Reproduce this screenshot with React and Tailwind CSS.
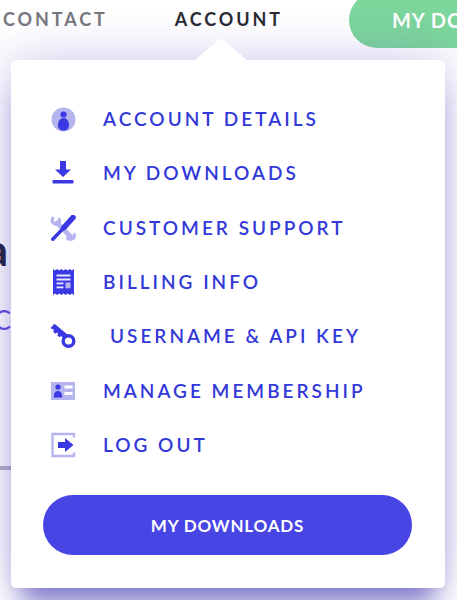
const blue = "#3a38e2";
const pale = "#b6b4ee";

const IconAccount = () => (
  <svg width="25" height="25" viewBox="0 0 25 25">
    <circle cx="12.500" cy="12.500" r="12" fill={pale} />
    <circle cx="12.500" cy="7.500" r="3.100" fill={blue} />
    <path d="M7 18.500c0-4.500 2.200-7.500 5.500-7.500s5.500 3 5.500 7.500c0 3-2.400 5-5.500 5s-5.500-2-5.500-5z" fill={blue} />
  </svg>
);
const IconDownload = () => (
  <svg width="24" height="26" viewBox="0 0 24 26">
    <path d="M9 1h6v8.500h5l-8 7.500-8-7.500h5z" fill={blue} />
    <rect x="1.500" y="20" width="21" height="3.500" rx="0.800" fill={blue} />
  </svg>
);
const IconTools = () => (
  <svg width="26" height="26" viewBox="0 0 26 26">
    <g fill="none" stroke={pale} strokeLinecap="round">
      <path d="M7 8l14 14" strokeWidth="4.600" />
      <path d="M2.800 3.200c-1.600 3.200 .6 6.600 4.700 6 1.600-.5 2.400-2.200 1.800-4.700" strokeWidth="3.200" />
      <path d="M17.500 23.300c3 2.200 7.500 .6 7-3.800" strokeWidth="3.200" />
    </g>
    <path d="M2.800 24.200l11.500-12" stroke={blue} strokeWidth="3.400" strokeLinecap="round" />
    <path d="M14 12.500l9-10" stroke={blue} strokeWidth="5.600" strokeLinecap="round" />
  </svg>
);
const IconBilling = () => (
  <svg width="23" height="28" viewBox="0 0 23 28">
    <path d="M1 1l2.100 1.500L5.200 1l2.100 1.500L9.400 1l2.100 1.500L13.600 1l2.100 1.500L17.800 1l2.100 1.500L22 1v26l-2.100-1.500L17.800 27l-2.100-1.500L13.600 27l-2.100-1.500L9.400 27l-2.100-1.500L5.200 27l-2.100-1.500L1 27z" fill={blue} />
    <rect x="4.500" y="6.500" width="14" height="2" fill="#e8e8ff" />
    <rect x="4.500" y="10.500" width="14" height="2" fill="#e8e8ff" />
    <rect x="4.500" y="14.500" width="7" height="1.800" fill="#e8e8ff" />
    <rect x="4.500" y="18.500" width="7" height="1.800" fill="#e8e8ff" />
    <rect x="13.500" y="14.500" width="5" height="5.800" fill={pale} />
  </svg>
);
const IconKey = () => (
  <svg width="28" height="26" viewBox="0 0 28 26">
    <path d="M1.500 5l4-4.200L19 12l-3.500 4-3.500-3-1.500 1.200-2.200-2 1-1.500-1.400-1.200-1.600 1.200-2.100-2 .9-1.700z" fill={blue} />
    <circle cx="19.500" cy="18" r="5.300" fill="#fff" stroke={blue} strokeWidth="3.400" />
  </svg>
);
const IconCard = () => (
  <svg width="26" height="20" viewBox="0 0 26 20">
    <rect x="1" y="1" width="24" height="18" fill={pale} />
    <circle cx="8" cy="6" r="2.600" fill={blue} />
    <path d="M3.800 16.500c0-4.500 1.700-6.500 4.200-6.500s4.200 2 4.200 6.500z" fill={blue} />
    <rect x="14.500" y="4.500" width="8" height="3" fill="#fff" />
    <rect x="14.500" y="11" width="8" height="3" fill="#fff" />
  </svg>
);
const IconLogout = () => (
  <svg width="26" height="26" viewBox="0 0 26 26">
    <path d="M24 5.500V2H2.500v22H24v-3.500" fill="none" stroke={pale} strokeWidth="2.400" />
    <path d="M8 10h7V6l8.500 7-8.500 7v-4H8z" fill={blue} />
  </svg>
);

const rows = [
  { icon: <IconAccount />, label: "ACCOUNT DETAILS" },
  { icon: <IconDownload />, label: "MY DOWNLOADS" },
  { icon: <IconTools />, label: "CUSTOMER SUPPORT" },
  { icon: <IconBilling />, label: "BILLING INFO" },
  { icon: <IconKey />, label: "USERNAME & API KEY", extra: true },
  { icon: <IconCard />, label: "MANAGE MEMBERSHIP" },
  { icon: <IconLogout />, label: "LOG OUT" },
];

export default function App() {
  return (
    <div className="relative w-[457px] h-[600px] overflow-hidden bg-white font-['Lato','Noto_Sans',sans-serif]">
      <header className="flex items-start h-[48px] overflow-hidden">
        <span className="ml-[3px] mt-[9px] text-[18px] leading-[20px] font-bold tracking-[2.9px] text-[#77777d]">CONTACT</span>
        <span className="ml-[67px] mt-[9px] text-[18px] leading-[20px] font-bold tracking-[2.9px] text-[#2b2b33]">ACCOUNT</span>
        <span className="ml-[66px] -mt-[8px] h-[56px] pl-[43px] w-[130px] shrink-0 rounded-l-[28px] bg-[#7dd69c] text-white text-[20px] leading-[56px] font-bold tracking-[1px] whitespace-nowrap overflow-hidden">MY DOWNLOADS</span>
      </header>

      <main className="h-[552px] overflow-hidden">
        <div className="w-[8px] mt-[176px] h-[50px] overflow-hidden flex justify-end">
          <span className="text-[44px] leading-[50px] font-bold text-[#23233c]">a</span>
        </div>
        <div className="w-[11px] mt-[31px] h-[30px] overflow-hidden flex justify-end">
          <span className="text-[26px] leading-[30px] text-[#6a4fe0]">C</span>
        </div>
        <div className="w-[11px] mt-[131px] h-[4px] bg-[#b7b5c8]" />
      </main>

      <div className="absolute left-[11px] top-[60px] w-[434px] h-[528px] rounded-[5px] bg-white pt-[32px] shadow-[0_0_50px_rgba(62,52,175,0.28),0_24px_24px_-10px_rgba(62,52,175,0.6)]">
        <div className="absolute left-[184px] top-[-22px] w-0 h-0 border-l-[26px] border-r-[26px] border-b-[22px] border-l-transparent border-r-transparent border-b-white" />
        <nav className="flex flex-col">
          {rows.map((r) => (
            <a key={r.label} className="flex items-center h-[54.33px]">
              <span className="ml-[38px] w-[28px] flex justify-center shrink-0">{r.icon}</span>
              <span className={`${r.extra ? "ml-[33px]" : "ml-[26px]"} text-[19px] leading-[24px] font-semibold tracking-[3px] text-[#3338d8] whitespace-nowrap`}>{r.label}</span>
            </a>
          ))}
        </nav>
        <button className="block ml-[32px] mt-[23px] w-[369px] h-[60px] rounded-[30px] bg-[#4845e5] text-white text-[17px] font-bold tracking-[0.8px]">MY DOWNLOADS</button>
      </div>
    </div>
  );
}
